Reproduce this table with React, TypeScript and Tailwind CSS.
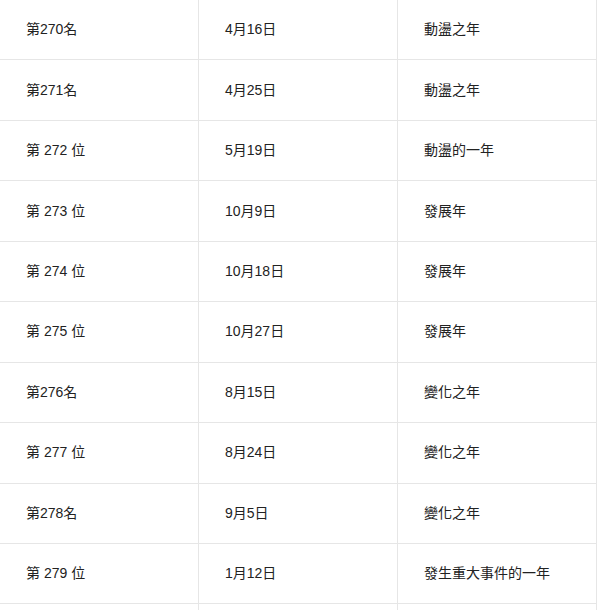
const rows: [string, string, string][] = [
  ["第270名", "4月16日", "動盪之年"],
  ["第271名", "4月25日", "動盪之年"],
  ["第 272 位", "5月19日", "動盪的一年"],
  ["第 273 位", "10月9日", "發展年"],
  ["第 274 位", "10月18日", "發展年"],
  ["第 275 位", "10月27日", "發展年"],
  ["第276名", "8月15日", "變化之年"],
  ["第 277 位", "8月24日", "變化之年"],
  ["第278名", "9月5日", "變化之年"],
  ["第 279 位", "1月12日", "發生重大事件的一年"],
  ["", "", ""],
];

export default function App() {
  return (
    <div
      className="h-[610px] w-[600px] overflow-hidden bg-white text-[14px] text-[#222]"
      style={{ fontFamily: '"Liberation Sans", "Noto Sans CJK TC", sans-serif' }}
    >
      <div className="grid w-[597px] grid-cols-3">
        {rows.map((row, i) =>
          row.map((cell, j) => (
            <div
              key={`${i}-${j}`}
              className="flex h-[60.44px] items-center border-b border-r border-[#e6e6e6] pl-[26px]"
            >
              {cell}
            </div>
          )),
        )}
      </div>
    </div>
  );
}
